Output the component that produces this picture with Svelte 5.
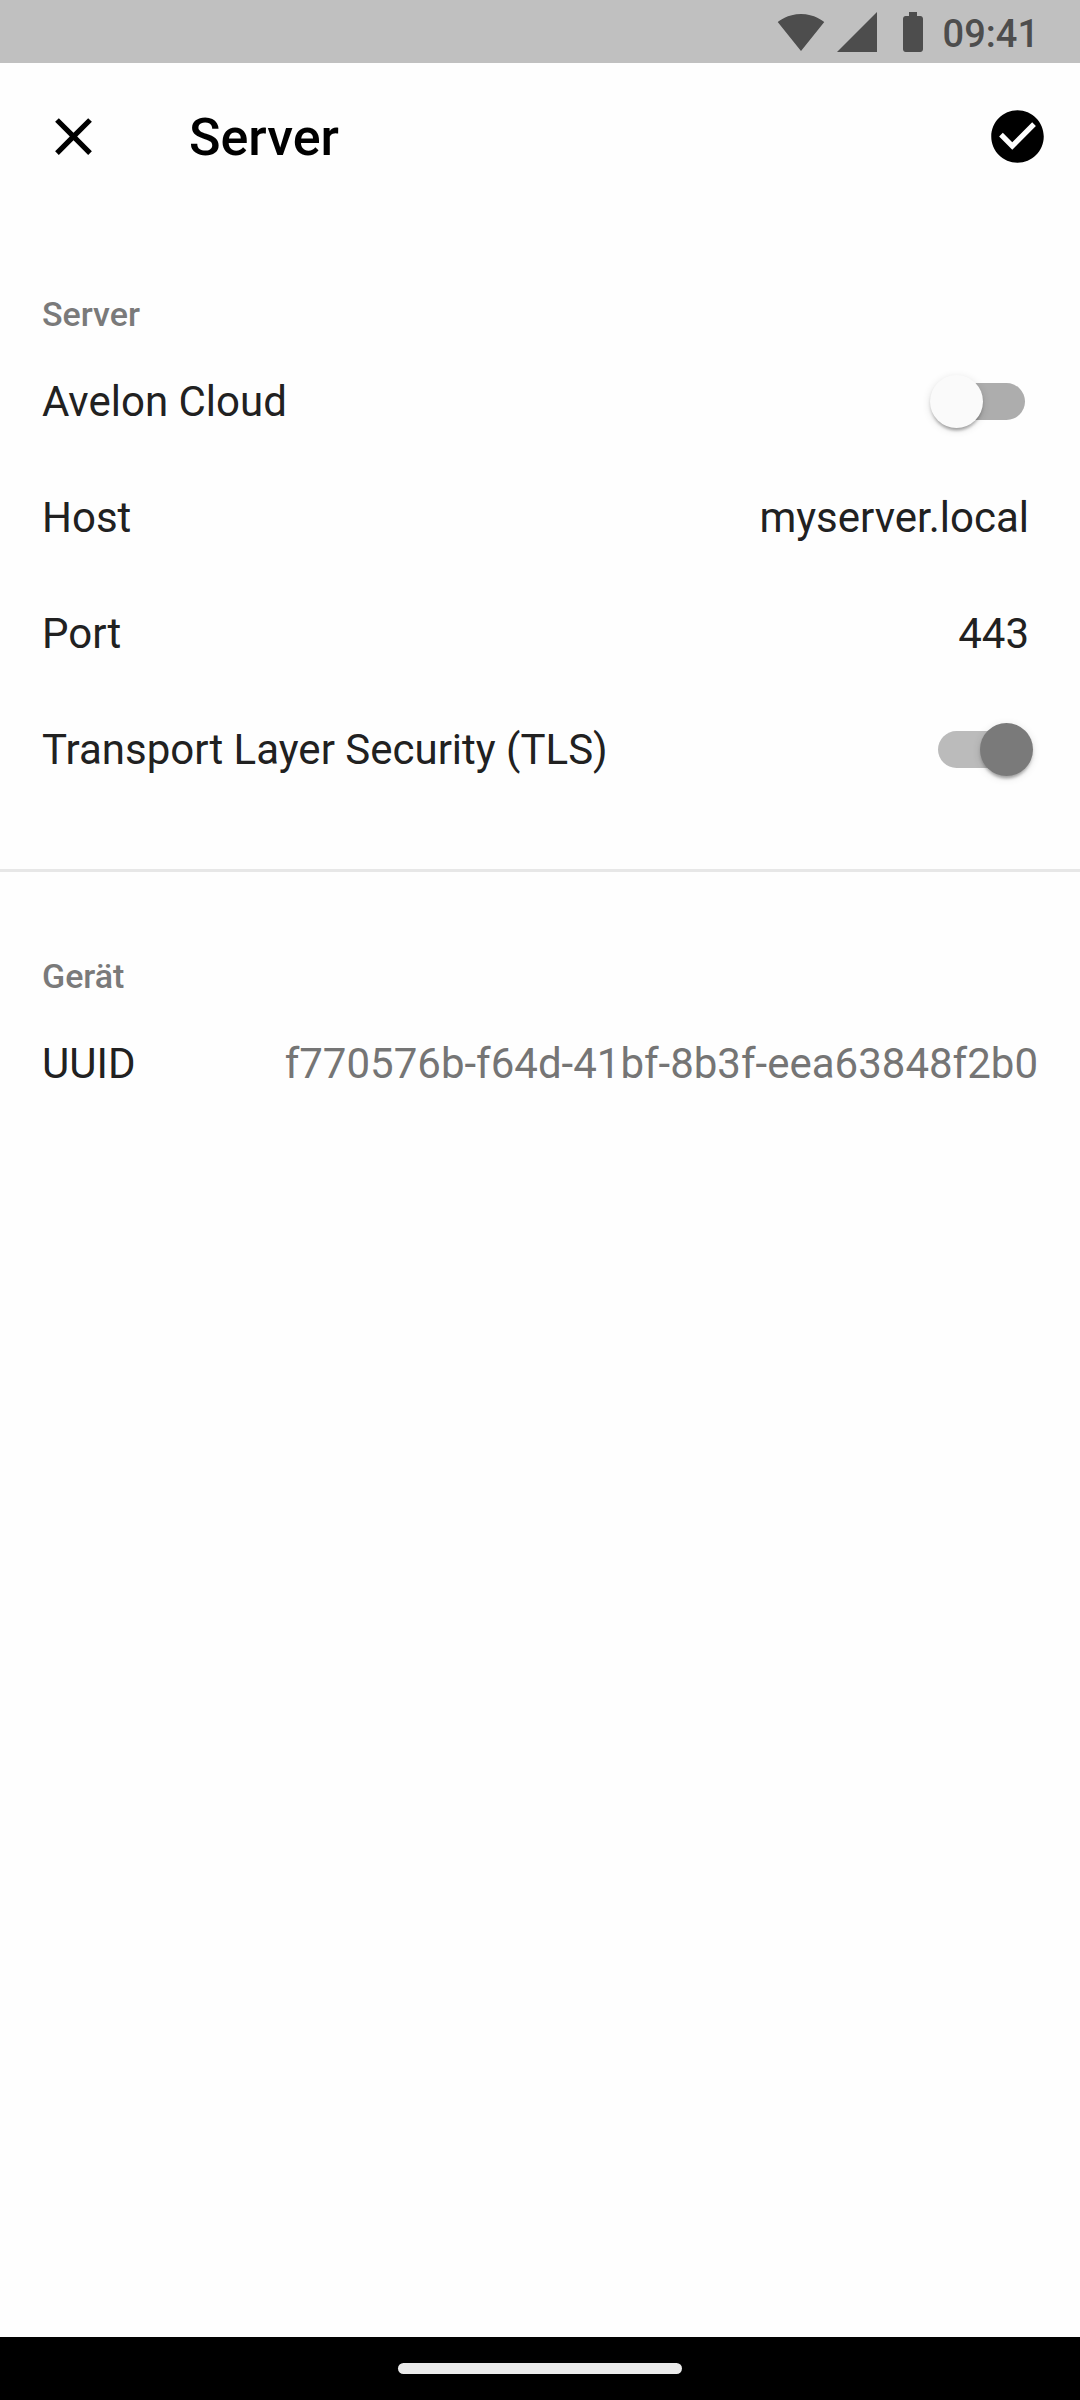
<script lang="ts">
  let useCloud = $state(false);
  let host = $state("myserver.local");
  let port = $state("443");
  let useTls = $state(true);

  const time = "09:41";
  const uuid = "f770576b-f64d-41bf-8b3f-eea63848f2b0";
</script>

<div class="screen">
  <div class="status-bar">
    <div class="status-icons">
      <svg viewBox="0 0 24 24" aria-hidden="true">
        <path d="M12.01 21.49L23.64 7c-.45-.34-4.93-4-11.64-4C5.28 3 .81 6.66.36 7l11.63 14.49.01.01.01-.01z" />
      </svg>
      <svg viewBox="0 0 24 24" aria-hidden="true">
        <path d="M2 22h20V2z" />
      </svg>
      <svg viewBox="0 0 24 24" aria-hidden="true">
        <path d="M15.67 4H14V2h-4v2H8.33C7.6 4 7 4.6 7 5.33v15.33C7 21.4 7.6 22 8.33 22h7.33c.74 0 1.34-.6 1.34-1.33V5.33C17 4.6 16.4 4 15.67 4z" />
      </svg>
    </div>
    <span class="status-time">{time}</span>
  </div>

  <header class="app-bar">
    <button class="icon-button" type="button" aria-label="Schließen">
      <svg viewBox="0 0 24 24" aria-hidden="true">
        <path d="M19 6.41L17.59 5 12 10.59 6.41 5 5 6.41 10.59 12 5 17.59 6.41 19 12 13.41 17.59 19 19 17.59 13.41 12z" />
      </svg>
    </button>
    <h1>Server</h1>
    <button class="icon-button" type="button" aria-label="Speichern">
      <svg viewBox="0 0 24 24" aria-hidden="true">
        <path d="M12 2C6.48 2 2 6.48 2 12s4.48 10 10 10 10-4.48 10-10S17.52 2 12 2zm-2 15l-5-5 1.41-1.41L10 14.17l7.59-7.59L19 8l-9 9z" />
      </svg>
    </button>
  </header>

  <main>
    <section>
      <h2>Server</h2>
      <div class="row">
        <label for="cloud">Avelon Cloud</label>
        <input id="cloud" class="switch" type="checkbox" role="switch" bind:checked={useCloud} />
      </div>
      <div class="row">
        <label for="host">Host</label>
        <input id="host" class="field" type="text" bind:value={host} />
      </div>
      <div class="row">
        <label for="port">Port</label>
        <input id="port" class="field" type="text" inputmode="numeric" bind:value={port} />
      </div>
      <div class="row">
        <label for="tls">Transport Layer Security (TLS)</label>
        <input id="tls" class="switch" type="checkbox" role="switch" bind:checked={useTls} />
      </div>
    </section>

    <section>
      <h2>Gerät</h2>
      <div class="row">
        <span>UUID</span>
        <span class="value">{uuid}</span>
      </div>
    </section>
  </main>

  <div class="nav-bar">
    <div class="nav-handle"></div>
  </div>
</div>

<style>
  :global(body) {
    margin: 0;
    background: #fefefe;
  }

  .screen {
    display: flex;
    flex-direction: column;
    min-height: 100vh;
    font-family: Roboto, "Liberation Sans", sans-serif;
    font-size: 42px;
    color: #212121;
  }

  .status-bar {
    display: flex;
    align-items: center;
    justify-content: flex-end;
    gap: 6px;
    height: 63px;
    padding: 0 41px 0 0;
    background: #c0c0c0;
    color: #4d4d4d;
  }

  .status-icons {
    display: flex;
    gap: 8px;
  }

  .status-icons svg {
    width: 48px;
    height: 48px;
    fill: currentColor;
  }

  .status-time {
    font-size: 38px;
    font-weight: 500;
    line-height: 42px;
    padding-top: 4px;
  }

  .app-bar {
    display: flex;
    align-items: center;
    height: 147px;
    padding: 0 31px 0 42px;
    background: #fefefe;
    color: #000;
  }

  .app-bar h1 {
    flex: 1;
    margin: 0;
    padding: 2px 0 0 84px;
    font-size: 52px;
    font-weight: 500;
    line-height: 60px;
  }

  .icon-button {
    display: flex;
    padding: 0;
    border: none;
    background: none;
    color: inherit;
    cursor: pointer;
  }

  .icon-button svg {
    width: 63px;
    height: 63px;
    fill: currentColor;
  }

  main {
    flex: 1;
  }

  section {
    padding: 84px 42px 62px;
  }

  section + section {
    border-top: 3px solid #e7e7e7;
  }

  h2 {
    margin: 0 0 9px;
    font-size: 34px;
    font-weight: 500;
    line-height: 40px;
    color: #7a7a7a;
  }

  .row {
    display: flex;
    align-items: center;
    justify-content: space-between;
    gap: 32px;
    height: 116px;
  }

  .value {
    color: #757575;
  }

  .field {
    flex: 1;
    min-width: 0;
    padding: 0 9px 0 0;
    border: none;
    outline: none;
    background: none;
    font: inherit;
    color: inherit;
    text-align: right;
  }

  .switch {
    appearance: none;
    position: relative;
    flex: none;
    width: 87px;
    height: 37px;
    margin: 0 13px 0 0;
    border-radius: 19px;
    background: #adadad;
    cursor: pointer;
  }

  .switch::before {
    content: "";
    position: absolute;
    top: -8px;
    left: -8px;
    width: 53px;
    height: 53px;
    border-radius: 50%;
    background: #fafafa;
    box-shadow:
      0 5px 3px -3px rgba(0, 0, 0, 0.2),
      0 3px 3px rgba(0, 0, 0, 0.14),
      0 2px 8px rgba(0, 0, 0, 0.12);
  }

  .switch:checked {
    background: #bbb;
  }

  .switch:checked::before {
    left: 42px;
    background: #7a7a7a;
  }

  .nav-bar {
    display: flex;
    align-items: center;
    justify-content: center;
    height: 63px;
    background: #000;
  }

  .nav-handle {
    width: 284px;
    height: 11px;
    border-radius: 6px;
    background: #ebebeb;
  }
</style>
